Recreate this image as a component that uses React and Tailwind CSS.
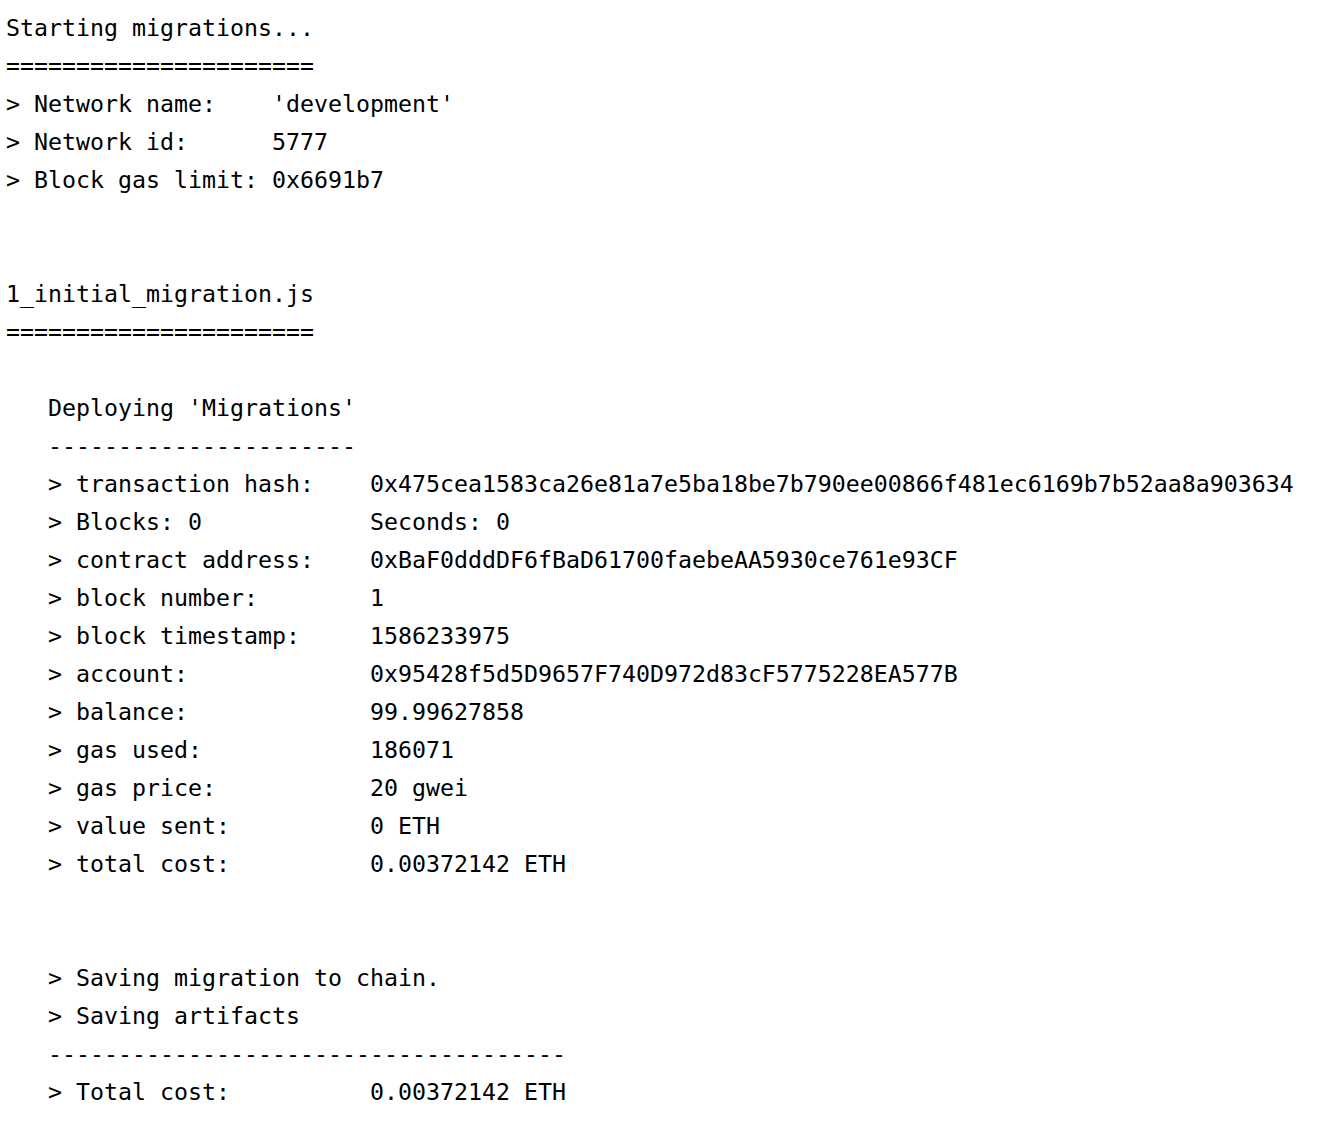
const LINES = [
  "Starting migrations...",
  "======================",
  "> Network name:    'development'",
  "> Network id:      5777",
  "> Block gas limit: 0x6691b7",
  "",
  "",
  "1_initial_migration.js",
  "======================",
  "",
  "   Deploying 'Migrations'",
  "   ----------------------",
  "   > transaction hash:    0x475cea1583ca26e81a7e5ba18be7b790ee00866f481ec6169b7b52aa8a903634",
  "   > Blocks: 0            Seconds: 0",
  "   > contract address:    0xBaF0dddDF6fBaD61700faebeAA5930ce761e93CF",
  "   > block number:        1",
  "   > block timestamp:     1586233975",
  "   > account:             0x95428f5d5D9657F740D972d83cF5775228EA577B",
  "   > balance:             99.99627858",
  "   > gas used:            186071",
  "   > gas price:           20 gwei",
  "   > value sent:          0 ETH",
  "   > total cost:          0.00372142 ETH",
  "",
  "",
  "   > Saving migration to chain.",
  "   > Saving artifacts",
  "   -------------------------------------",
  "   > Total cost:          0.00372142 ETH",
];

export default function App() {
  return (
    <div className="min-h-screen bg-white">
      <pre className="m-0 pl-[6px] pt-[9px] font-['DejaVu_Sans_Mono',monospace] text-[23.25px] leading-[38px] text-black whitespace-pre">
        {LINES.map((l, i) => (
          <div key={i} className="h-[38px]">{l}</div>
        ))}
      </pre>
    </div>
  );
}
